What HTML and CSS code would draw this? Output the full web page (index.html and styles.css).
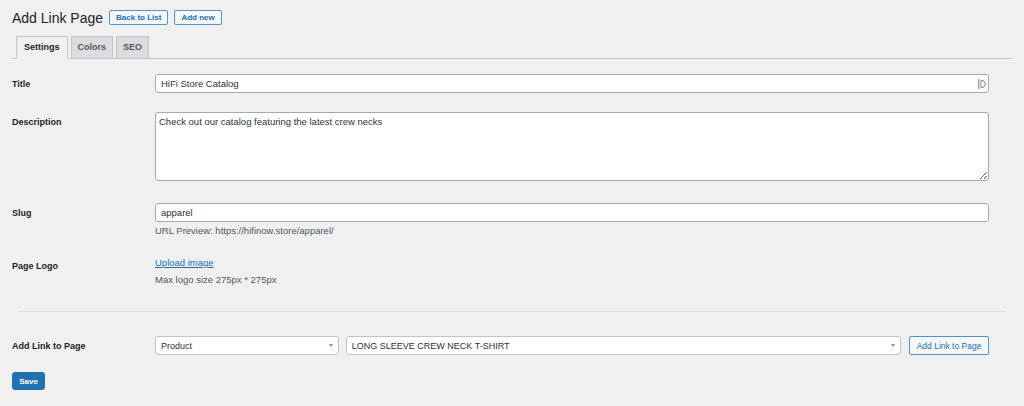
FILE: index.html
```html
<!DOCTYPE html>
<html lang="en">

<head>
    <meta charset="UTF-8">
    <meta name="viewport" content="width=device-width, initial-scale=1.0">
    <title>Add Link Page</title>
    <link rel="stylesheet" href="styles.css">
</head>

<body>
    <div class="wrap">
        <div class="page-header">
            <h1>Add Link Page</h1>
            <a href="#" class="header-btn">Back to List</a>
            <a href="#" class="header-btn">Add new</a>
        </div>

        <nav class="tabs">
            <a href="#" class="tab tab-active">Settings</a>
            <a href="#" class="tab">Colors</a>
            <a href="#" class="tab">SEO</a>
        </nav>

        <div class="form-table">
            <div class="row">
                <label class="row-label" for="title">Title</label>
                <div class="row-field">
                    <div class="input-wrap">
                        <input id="title" class="text-input" type="text" value="HiFi Store Catalog">
                        <svg class="autofill-icon" width="8" height="10" viewBox="0 0 8 10">
                            <rect x="0" y="0" width="1.4" height="10" fill="#9a9da1"/>
                            <path d="M3 1.5h2.2l2.3 3.5-2.3 3.5H3z" fill="none" stroke="#9a9da1" stroke-width="1.2"/>
                        </svg>
                    </div>
                </div>
            </div>

            <div class="row">
                <label class="row-label" for="description">Description</label>
                <div class="row-field">
                    <textarea id="description" class="text-area">Check out our catalog featuring the latest crew necks</textarea>
                </div>
            </div>

            <div class="row">
                <label class="row-label" for="slug">Slug</label>
                <div class="row-field">
                    <input id="slug" class="text-input" type="text" value="apparel">
                    <p class="field-desc">URL Preview: https://hifinow.store/apparel/</p>
                </div>
            </div>

            <div class="row">
                <label class="row-label">Page Logo</label>
                <div class="row-field">
                    <a href="#" class="upload-link">Upload image</a>
                    <p class="field-desc field-desc-logo">Max logo size 275px * 275px</p>
                </div>
            </div>
        </div>

        <hr class="separator">

        <div class="form-table form-table-links">
            <div class="row">
                <label class="row-label">Add Link to Page</label>
                <div class="row-field link-controls">
                    <span class="select-wrap select-type">
                        <select class="select-input">
                            <option>Product</option>
                        </select>
                    </span>
                    <span class="select-wrap select-item">
                        <select class="select-input">
                            <option>LONG SLEEVE CREW NECK T-SHIRT</option>
                        </select>
                    </span>
                    <button class="add-link-btn">Add Link to Page</button>
                </div>
            </div>
        </div>

        <div class="submit">
            <button class="save-btn">Save</button>
        </div>
    </div>
</body>

</html>
```

FILE: styles.css
```css
/* Admin page */
body {
    margin: 0;
    background-color: #f0f0f1;
    color: #1d2327;
    font-family: "Liberation Sans", Arial, sans-serif;
    font-size: 9.5px;
}

.wrap {
    padding: 0 12px;
}

/* Header */
.page-header {
    display: flex;
    align-items: center;
    height: 23px;
    padding-top: 6px;
}

h1 {
    margin: 0 6px 0 0;
    font-size: 14px;
    font-weight: 400;
    color: #1d2327;
}

.header-btn {
    box-sizing: border-box;
    height: 15px;
    line-height: 13px;
    padding: 0 6px;
    margin-right: 6px;
    border: 1px solid #4f94cc;
    border-radius: 2px;
    background-color: #f6f7f7;
    color: #2271b1;
    font-size: 8px;
    font-weight: 700;
    text-decoration: none;
}

/* Tabs */
.tabs {
    display: flex;
    gap: 3px;
    margin-top: 7px;
    padding-left: 4px;
    border-bottom: 1px solid #c3c4c7;
    height: 22px;
}

.tab {
    box-sizing: border-box;
    height: 23px;
    line-height: 21px;
    padding: 0 6px;
    border: 1px solid #c3c4c7;
    background-color: #dcdcde;
    color: #50575e;
    font-size: 9px;
    font-weight: 700;
    text-decoration: none;
}

.tab-active {
    padding: 0 7px;
    background-color: #f0f0f1;
    border-bottom-color: #f0f0f1;
    color: #1d2327;
}

/* Form */
.form-table {
    padding-top: 5px;
}

.form-table-links {
    padding-top: 14px;
}

.row {
    display: grid;
    grid-template-columns: 143px 834px;
    padding: 10px 0 9px;
}

.row-label {
    padding-top: 4.5px;
    font-size: 9px;
    line-height: 11px;
    font-weight: 700;
    color: #1d2327;
}

.input-wrap {
    position: relative;
}

.text-input {
    box-sizing: border-box;
    display: block;
    width: 100%;
    height: 19px;
    margin: 0;
    padding: 0 5px;
    border: 1px solid #a7aaad;
    border-radius: 3px;
    background-color: #ffffff;
    color: #2c3338;
    font-family: inherit;
    font-size: 9.5px;
}

.autofill-icon {
    position: absolute;
    right: 3px;
    top: 5px;
}

.text-area {
    box-sizing: border-box;
    display: block;
    width: 100%;
    height: 69px;
    margin: 0 0 3px;
    padding: 3px 3px;
    border: 1px solid #a7aaad;
    border-radius: 3px;
    background-color: #ffffff;
    color: #2c3338;
    font-family: inherit;
    font-size: 9.5px;
    line-height: 12px;
}

.field-desc {
    margin: 3px 0 0;
    line-height: 12px;
    color: #50575e;
}

.field-desc-logo {
    margin-top: 5px;
}

.upload-link {
    display: block;
    margin-top: 1px;
    line-height: 12px;
    color: #2271b1;
    text-decoration: underline;
}

.separator {
    margin: 16px 7px 0;
    border: none;
    border-top: 1px solid #dcdcde;
    height: 0;
}

/* Link picker */
.link-controls {
    display: flex;
    gap: 7px;
}

.select-wrap {
    position: relative;
    display: block;
}

.select-wrap::after {
    content: "";
    position: absolute;
    right: 6px;
    top: 8px;
    border-left: 2.5px solid transparent;
    border-right: 2.5px solid transparent;
    border-top: 3px solid #8c8f94;
}

.select-type {
    width: 184px;
}

.select-item {
    width: 556px;
}

.select-input {
    box-sizing: border-box;
    width: 100%;
    height: 19px;
    margin: 0;
    padding: 0 5px;
    appearance: none;
    border: 1px solid #c3c4c7;
    border-radius: 3px;
    background-color: #ffffff;
    color: #2c3338;
    font-family: inherit;
    font-size: 9px;
}

.add-link-btn {
    box-sizing: border-box;
    width: 80px;
    height: 19px;
    margin-left: 1px;
    padding: 0;
    border: 1px solid #4f94cc;
    border-radius: 2px;
    background-color: #f6f7f7;
    color: #2271b1;
    font-family: inherit;
    font-size: 8.5px;
}

.submit {
    margin-top: 8px;
}

.save-btn {
    box-sizing: border-box;
    width: 33px;
    height: 18px;
    padding: 0;
    border: 1px solid #2271b1;
    border-radius: 3px;
    background-color: #2271b1;
    color: #ffffff;
    font-family: inherit;
    font-size: 8px;
    font-weight: 700;
}
```
